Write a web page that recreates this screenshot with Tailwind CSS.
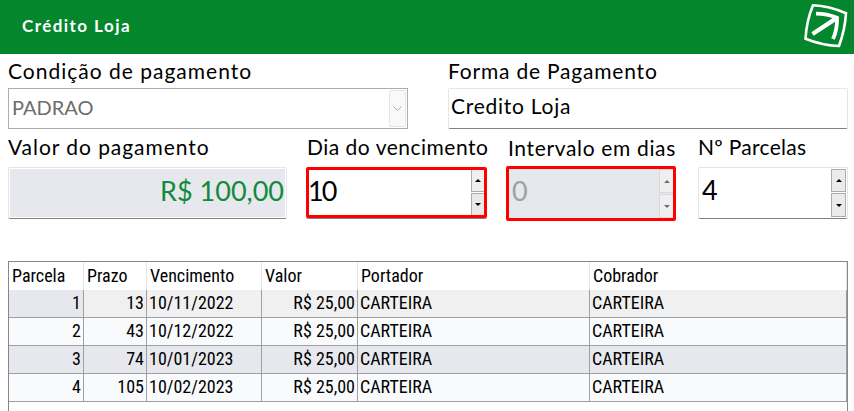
<!DOCTYPE html>
<html lang="pt-BR">
<head>
    <meta charset="UTF-8">
    <meta name="viewport" content="width=device-width, initial-scale=1.0">
    <title>Crédito Loja</title>
    <script src="https://cdn.jsdelivr.net/npm/@tailwindcss/browser@4"></script>
</head>
<body class="bg-white text-black h-[411px] overflow-hidden font-['Lato',sans-serif]">
    <header class="flex items-center justify-between h-[54px] bg-[#03862c] pl-[22px] pr-[5px]">
        <h1 class="text-white text-[17px] leading-5 font-bold tracking-[1.45px] -mt-[2px]">Crédito Loja</h1>
        <svg class="w-[46px] h-[46px] -mt-1" viewBox="0 0 46 46" fill="none" stroke="white">
            <path d="M10 3.3Q26 4 43 11.2Q42 28 36 44Q19 43.5 2.5 36.8Q3.5 19 10 3.3Z" stroke-width="2.6"/>
            <path d="M13 11.7Q24 11.7 34 15.8Q34.5 27 30 37" stroke-width="3.8"/>
            <path d="M34 15.8L9.5 32" stroke-width="4.4"/>
        </svg>
    </header>

    <main class="pl-2 pr-[6px]">
        <div class="flex">
            <div class="w-[400px] shrink-0 mr-10">
                <label class="block h-[34px] pt-[5px] text-[21px] leading-6 whitespace-nowrap tracking-[1px]">Condição de pagamento</label>
                <div class="flex justify-between h-[41px] border border-[#abadb3] pl-[3px] pr-px py-px">
                    <span class="text-[20px] leading-[34px] text-[#6d6d6d]">PADRAO</span>
                    <span class="flex items-center justify-center w-[17px] h-[37px] rounded-xs border border-[#e5e5e5] bg-[#f9f9f9]">
                        <svg class="w-[9px] h-[6px]" viewBox="0 0 9 6" fill="none" stroke="#a8a8a8"><path d="M.5 .5L4.5 4.5L8.5 .5"/></svg>
                    </span>
                </div>
            </div>
            <div class="w-[400px] shrink-0">
                <label class="block h-[34px] pt-[5px] text-[21px] leading-6 whitespace-nowrap tracking-[0.8px]">Forma de Pagamento</label>
                <div class="h-[41px] rounded-xs border border-[#e5e5e5] border-b-[#838383] pl-[2px] text-[21px] leading-[33px] tracking-[0.75px]">Credito Loja</div>
            </div>
        </div>

        <div class="flex">
            <div class="w-[279px] shrink-0 mr-[19px]">
                <label class="block h-[38px] pt-[6px] text-[21px] leading-6 whitespace-nowrap tracking-[0.95px]">Valor do pagamento</label>
                <div class="h-[52px] rounded-xs border border-[#e5e5e5] border-b-[#838383] p-px">
                    <div class="h-[48px] bg-[#e6e8ed] pr-[1px] text-right text-[27px] leading-[43px] text-[#128a3b]">R$ 100,00</div>
                </div>
            </div>
            <div class="w-[181px] shrink-0 mr-[19px]">
                <label class="block h-[38px] pt-[6px] pl-px text-[21px] leading-6 whitespace-nowrap tracking-[0.5px]">Dia do vencimento</label>
                <div class="flex justify-between h-[51px] rounded-xs border-3 border-[#ff0000] shadow-[0_1px_0_#838383]">
                    <span class="text-[27px] leading-[41px] -ml-px tracking-[-2px]">10</span>
                    <div class="flex flex-col justify-between w-[13px]">
                        <span class="flex items-center justify-center h-[22px] border-l border-b border-[#acacac] bg-[#efefef]"><svg class="w-[6px] h-[3px]" viewBox="0 0 6 3"><path d="M3 0L6 3H0Z"/></svg></span>
                        <span class="flex items-center justify-center h-[22px] border-l border-t border-[#acacac] bg-[#e9e9e9]"><svg class="w-[6px] h-[3px]" viewBox="0 0 6 3"><path d="M0 0H6L3 3Z"/></svg></span>
                    </div>
                </div>
            </div>
            <div class="w-[170px] shrink-0 mr-[22px]">
                <label class="block h-[37px] pt-[7px] pl-[2px] text-[21px] leading-6 whitespace-nowrap tracking-[0.65px]">Intervalo em dias</label>
                <div class="flex justify-between h-[55px] rounded-xs border-3 border-[#ff0000] bg-[#e6e8ed] pl-[3px]">
                    <span class="text-[27px] leading-[43px] text-[#a0a0a0]">0</span>
                    <div class="flex flex-col justify-between w-[14px]">
                        <span class="flex items-center justify-center h-[24px] border border-r-0 border-[#d9d9dc] bg-[#efefef]"><svg class="w-[6px] h-[3px]" viewBox="0 0 6 3" fill="#6d6d6d"><path d="M3 0L6 3H0Z"/></svg></span>
                        <span class="flex items-center justify-center h-[24px] border border-r-0 border-[#d9d9dc] bg-[#efefef]"><svg class="w-[6px] h-[3px]" viewBox="0 0 6 3" fill="#6d6d6d"><path d="M0 0H6L3 3Z"/></svg></span>
                    </div>
                </div>
            </div>
            <div class="w-[150px] shrink-0">
                <label class="block h-[38px] pt-[6px] text-[21px] leading-6 whitespace-nowrap tracking-[0.3px]">Nº Parcelas</label>
                <div class="flex justify-between h-[52px] rounded-xs border border-[#e5e5e5] border-b-[#838383] pl-[3px] pr-px py-px">
                    <span class="text-[27px] leading-[41px]">4</span>
                    <div class="flex flex-col justify-between w-[15px]">
                        <span class="flex items-center justify-center h-[23px] border border-[#acacac] bg-[#ebebeb]"><svg class="w-[6px] h-[3px]" viewBox="0 0 6 3"><path d="M3 0L6 3H0Z"/></svg></span>
                        <span class="flex items-center justify-center h-[24px] border border-[#acacac] bg-[#ebebeb]"><svg class="w-[6px] h-[3px]" viewBox="0 0 6 3"><path d="M0 0H6L3 3Z"/></svg></span>
                    </div>
                </div>
            </div>
        </div>

        <!-- Parcelas -->
        <div class="mt-[40px] w-[840px] h-[160px] border border-[#828790] font-['Roboto_Condensed','Roboto',sans-serif] font-stretch-condensed">
            <table class="w-[838px] table-fixed border-separate border-spacing-0 text-[18px] leading-[26px] whitespace-nowrap">
                <colgroup>
                    <col class="w-[75px]"><col class="w-[63px]"><col class="w-[115px]"><col class="w-[96px]"><col class="w-[232px]"><col>
                </colgroup>
                <thead>
                    <tr class="h-[28px] text-left [&>th]:p-0 [&>th]:pl-[3px] [&>th]:font-normal [&>th]:border-r [&>th]:border-[#e5e5e5]">
                        <th>Parcela</th><th>Prazo</th><th>Vencimento</th><th>Valor</th><th>Portador</th><th>Cobrador</th>
                    </tr>
                </thead>
                <tbody id="parcelas" class="leading-[25px] [&_td]:p-0 [&_td]:h-[28px] [&_td]:align-top [&_td]:border-r [&_td]:border-b [&_td]:border-[#a0a0a0]"></tbody>
            </table>
        </div>
    </main>

    <script>
        const parcelas = [
            { numero: 1, prazo: 13, vencimento: '10/11/2022' },
            { numero: 2, prazo: 43, vencimento: '10/12/2022' },
            { numero: 3, prazo: 74, vencimento: '10/01/2023' },
            { numero: 4, prazo: 105, vencimento: '10/02/2023' }
        ];

        function rowColor(numero) {
            if (numero === 1) return 'bg-[#f0f0f0]';
            return numero % 2 ? 'bg-[#e6e8ed]' : 'bg-[#f8fafc]';
        }

        document.getElementById('parcelas').innerHTML = parcelas.map(p => `
            <tr class="${rowColor(p.numero)}">
                <td class="text-right ${p.numero === 1 ? 'bg-[#e6e8ed]' : ''}"><span class="pr-[2px]">${p.numero}</span></td>
                <td class="text-right"><span class="pr-[2px]">${p.prazo}</span></td>
                <td><span class="pl-[2px]">${p.vencimento}</span></td>
                <td class="text-right"><span class="pr-[2px]">R$ 25,00</span></td>
                <td><span class="pl-[2px]">CARTEIRA</span></td>
                <td><span class="pl-[2px]">CARTEIRA</span></td>
            </tr>
        `).join('');
    </script>
</body>
</html>
